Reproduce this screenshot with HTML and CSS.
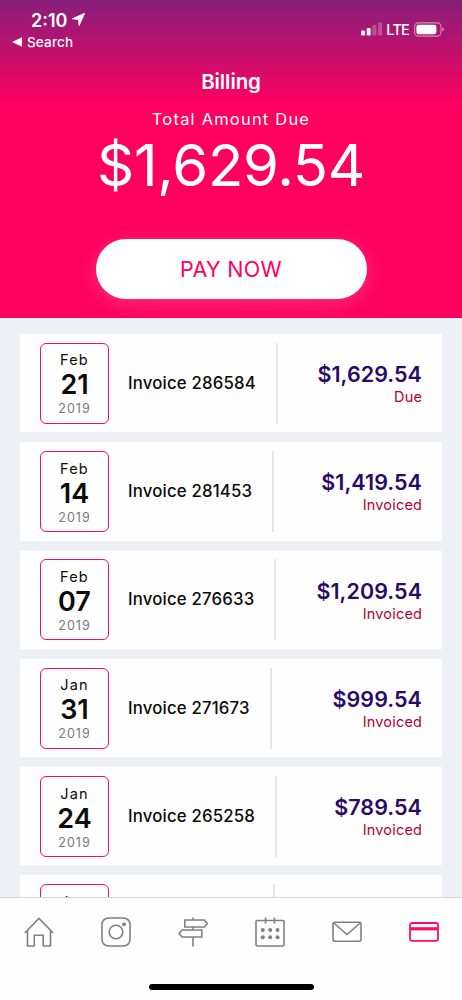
FILE: index.html
```html
<!DOCTYPE html>
<html lang="en">
<head>
    <meta charset="UTF-8">
    <meta name="viewport" content="width=device-width, initial-scale=1.0">
    <title>Billing</title>
    <link rel="stylesheet" href="styles.css">
</head>
<body>
    <div class="app">
        <header class="header">
            <div class="status">
                <div class="status-left">
                    <div class="time">
                        <span>2:10</span>
                        <svg width="13" height="13" viewBox="0 0 13 13"><path d="M12.6 0.3 L7.1 12.6 L6.5 6.4 L0.3 5.8 Z" fill="#fff" stroke="#fff" stroke-width="0.9" stroke-linejoin="round"/></svg>
                    </div>
                    <div class="back">
                        <svg width="10" height="10" viewBox="0 0 10 10"><path d="M0 5 L10 0.3 V9.7 Z" fill="#fff"/></svg>
                        <span>Search</span>
                    </div>
                </div>
                <div class="status-right">
                    <svg width="22" height="14" viewBox="0 0 22 14" fill="#fff">
                        <rect x="0" y="8.5" width="4" height="5" rx="1"/>
                        <rect x="5.7" y="6" width="4" height="7.5" rx="1"/>
                        <rect x="11.4" y="3" width="4" height="10.5" rx="1" opacity="0.25"/>
                        <rect x="17.1" y="0.5" width="4" height="13" rx="1" opacity="0.25"/>
                    </svg>
                    <span class="lte">LTE</span>
                    <svg width="31" height="15" viewBox="0 0 31 15">
                        <rect x="0.6" y="0.9" width="26.4" height="13.2" rx="3.8" fill="none" stroke="#fff" stroke-width="1.1" opacity="0.5"/>
                        <rect x="2.4" y="2.7" width="20" height="9.6" rx="2.2" fill="#fff"/>
                        <path d="M28.3 5.3 Q30 6 30 7.5 T28.3 9.7 Z" fill="#fff" opacity="0.5"/>
                    </svg>
                </div>
            </div>
            <h1>Billing</h1>
            <p class="total-label">Total Amount Due</p>
            <p class="total">$1,629.54</p>
            <button class="pay">PAY NOW</button>
        </header>

        <ul class="invoices">
            <li>
                <div class="date"><span class="month">Feb</span><b>21</b><span class="year">2019</span></div>
                <div class="name">Invoice 286584</div>
                <div class="price"><strong>$1,629.54</strong><span>Due</span></div>
            </li>
            <li>
                <div class="date"><span class="month">Feb</span><b>14</b><span class="year">2019</span></div>
                <div class="name">Invoice 281453</div>
                <div class="price"><strong>$1,419.54</strong><span>Invoiced</span></div>
            </li>
            <li>
                <div class="date"><span class="month">Feb</span><b>07</b><span class="year">2019</span></div>
                <div class="name">Invoice 276633</div>
                <div class="price"><strong>$1,209.54</strong><span>Invoiced</span></div>
            </li>
            <li>
                <div class="date"><span class="month">Jan</span><b>31</b><span class="year">2019</span></div>
                <div class="name">Invoice 271673</div>
                <div class="price"><strong>$999.54</strong><span>Invoiced</span></div>
            </li>
            <li>
                <div class="date"><span class="month">Jan</span><b>24</b><span class="year">2019</span></div>
                <div class="name">Invoice 265258</div>
                <div class="price"><strong>$789.54</strong><span>Invoiced</span></div>
            </li>
            <li>
                <div class="date"><span class="month">Jan</span></div>
                <div class="name last"></div>
            </li>
        </ul>

        <nav class="tabbar">
            <div class="tabs">
                <a class="tab">
                    <svg viewBox="0 0 30 30"><path d="M0.8 16 L15 1.5 L29.2 16 M3.5 13.5 V29 H10.3 V18.2 H19.2 V29 H26.5 V13.5"/></svg>
                </a>
                <a class="tab">
                    <svg viewBox="0 0 30 30"><rect x="1" y="1" width="28" height="28" rx="6.5"/><circle cx="15" cy="15" r="6.8"/><circle class="dot" cx="23" cy="7.3" r="1.9"/></svg>
                </a>
                <a class="tab">
                    <svg viewBox="0 0 30 30"><path d="M15 0.5 V3 M15 10 V13 M15 20 V29.5 M6.8 3 H26.5 L29.2 6.5 L26.5 10 H6.8 Z M23.8 13 H4 L1.2 16.5 L4 20 H23.8 Z"/></svg>
                </a>
                <a class="tab">
                    <svg viewBox="0 0 30 30">
                        <rect x="1" y="3.5" width="28" height="25.5" rx="1"/>
                        <path d="M10.5 0.5 V6.5 M19.5 0.5 V6.5"/>
                        <g class="dot"><circle cx="7.8" cy="13" r="2"/><circle cx="15.2" cy="13" r="2"/><circle cx="22.5" cy="13" r="2"/><circle cx="7.8" cy="20.3" r="2"/><circle cx="15.2" cy="20.3" r="2"/><circle cx="22.5" cy="20.3" r="2"/></g>
                    </svg>
                </a>
                <a class="tab">
                    <svg viewBox="0 0 30 30"><rect x="1" y="5.3" width="28" height="19" rx="2"/><path d="M1.8 6 L15 17.5 L28.2 6"/></svg>
                </a>
                <a class="tab on">
                    <svg viewBox="0 0 30 30"><rect x="1" y="6" width="28" height="17.8" rx="2"/><rect class="dot" x="1" y="10.2" width="28" height="3.2"/></svg>
                </a>
            </div>
            <div class="home-bar"></div>
        </nav>
    </div>
</body>
</html>
```

FILE: styles.css
```css
* { margin:0; padding:0; box-sizing:border-box;}
ul,li { list-style:none;}

body { font-family:Inter, "Liberation Sans", sans-serif; background-color:#eff0f6; color:#0b0b0b;}
svg { display:block;}

.app { width:462px; height:1000px; overflow:hidden; display:flex; flex-direction:column;}

/* header */
.header { flex:none; height:318px; display:flex; flex-direction:column; align-items:center; color:#fff; background:linear-gradient(#861f7a 0, #ff005f 106px);}
.status { width:100%; height:68px; padding:9px 17px 0 12px; display:flex; justify-content:space-between;}
.time { display:flex; align-items:center; gap:5px; height:22px; padding-left:19px; font-size:18px; font-weight:600;}
.time svg { margin-top:-2px;}
.back { display:flex; align-items:center; gap:5px; height:22px; font-size:13.5px; font-weight:500; letter-spacing:0.15px;}
.status-right { display:flex; align-items:center; height:40px;}
.lte { margin:0 5px 0 4px; font-size:14.5px; font-weight:500; letter-spacing:-0.8px;}
.status-right > svg:first-child { margin-right:-1px;}

h1 { height:27px; line-height:27px; font-size:20.5px; font-weight:600; letter-spacing:-0.1px;}
.total-label { margin-top:12px; height:24px; line-height:25px; font-size:16.5px; letter-spacing:1.2px;}
.total { height:68px; line-height:68px; font-size:58px; font-weight:400; letter-spacing:-0.3px;}
.pay { margin-top:40px; width:271px; height:60px; border:0; border-radius:30px; background-color:#fff; color:#ff005f; font-family:inherit; font-size:21.5px; letter-spacing:0.3px; box-shadow:0 4px 20px rgba(255,255,255,0.18);}

/* invoice list */
.invoices { flex:1; min-height:0; overflow:hidden; padding:16px 20px 0;}
.invoices li { display:flex; align-items:center; height:98.3px; margin-bottom:10px; padding:0 20px; background-color:#fefefe;}
.date { flex:none; width:69px; height:81px; padding-top:6.7px; border:1.3px solid #ff0a66; border-radius:6px; display:flex; flex-direction:column; align-items:center;}
.month { line-height:20px; font-size:14.5px; letter-spacing:1.2px;}
.date b { line-height:30px; font-size:27px; font-weight:600;}
.year { line-height:18px; font-size:12.5px; letter-spacing:1px; color:#77777d;}
.name { height:81px; line-height:81px; padding:0 20px 0 19px; border-right:2px solid #e6e6e6; font-size:16.8px; font-weight:500; letter-spacing:0.17px; white-space:nowrap;}
.name.last { width:166px;}
.price { margin-left:auto; padding-top:2px; display:flex; flex-direction:column; align-items:flex-end;}
.price strong { line-height:26px; font-size:21.5px; font-weight:600; letter-spacing:0.05px; color:#2b0a66;}
.price span { line-height:20px; font-size:14.5px; letter-spacing:0.2px; margin-right:-0.2px; color:#b80030;}

/* bottom tabs */
.tabbar { flex:none; height:103px; background-color:#fefefe; border-top:1px solid #d4d4d6; display:flex; flex-direction:column; align-items:center;}
.tabs { width:100%; height:68px; display:flex;}
.tab { flex:1; display:flex; align-items:center; justify-content:center;}
.tab svg { width:30px; height:30px; fill:none; stroke:#808080; stroke-width:1.6;}
.tab .dot { fill:#808080; stroke:none;}
.tab.on svg { stroke:#ff0a66; stroke-width:1.8;}
.tab.on .dot { fill:#ff0a66;}
.home-bar { margin-top:18px; width:165px; height:6px; border-radius:3px; background-color:#000;}
```
